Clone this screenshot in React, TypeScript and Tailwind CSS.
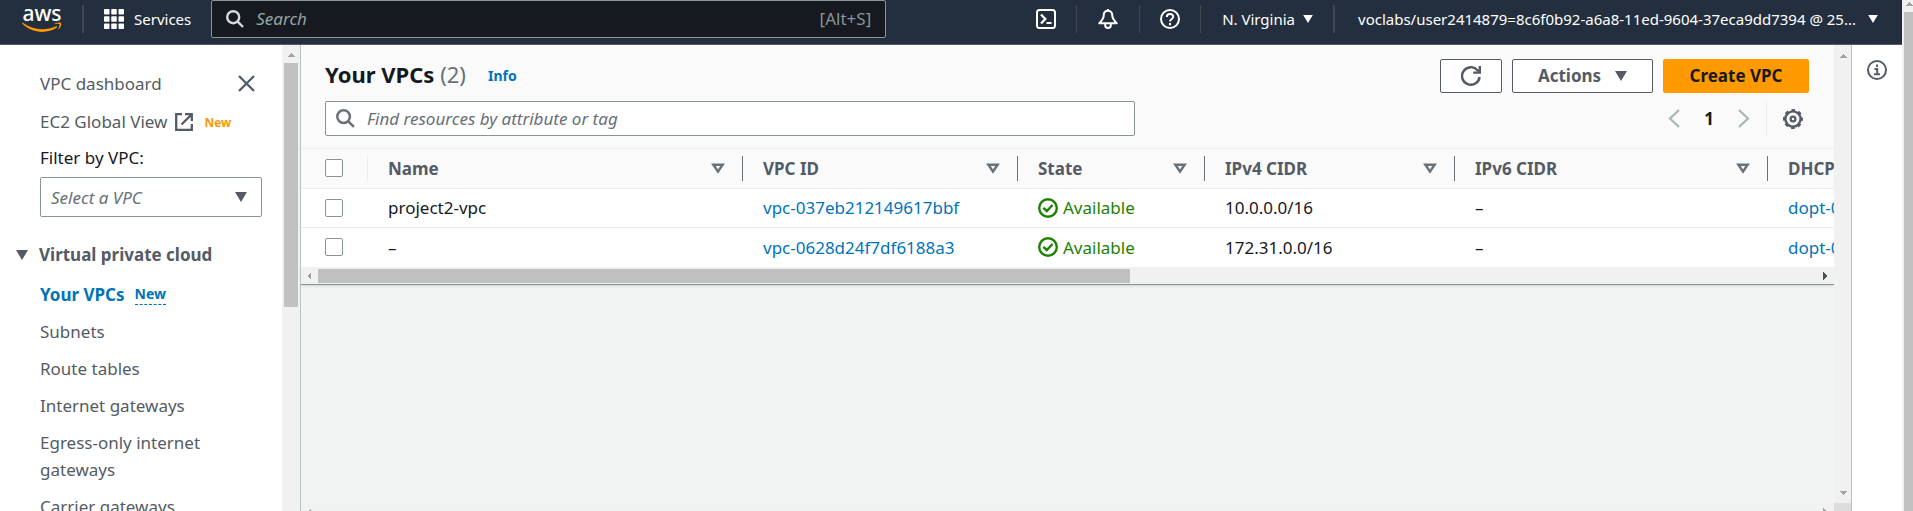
import React from "react";

const NAV = [
  "Subnets",
  "Route tables",
  "Internet gateways",
  "Egress-only internet gateways",
  "Carrier gateways",
];

const VPCS = [
  { name: "project2-vpc", id: "vpc-037eb212149617bbf", v4: "10.0.0.0/16", v6: "–", dhcp: "dopt-0" },
  { name: "–", id: "vpc-0628d24f7df6188a3", v4: "172.31.0.0/16", v6: "–", dhcp: "dopt-0" },
];

const COLUMNS = ["Name", "VPC ID", "State", "IPv4 CIDR", "IPv6 CIDR"];

function Arrow({ dir, className = "" }: { dir: "up" | "down" | "left" | "right"; className?: string }) {
  const d = {
    up: "M4 0 8 4H0Z",
    down: "M0 0H8L4 4Z",
    left: "M4 0V8L0 4Z",
    right: "M0 0 4 4 0 8Z",
  }[dir];
  const flat = dir === "up" || dir === "down";
  return (
    <svg
      className={"shrink-0 " + (className || "text-[#a3a3a3]")}
      width={flat ? 8 : 4}
      height={flat ? 4 : 8}
      viewBox={flat ? "0 0 8 4" : "0 0 4 8"}
      fill="currentColor"
      shapeRendering="crispEdges"
    >
      <path d={d} />
    </svg>
  );
}

function Caret({ className = "" }: { className?: string }) {
  return (
    <svg className={"shrink-0 " + className} viewBox="0 0 12 10" fill="currentColor">
      <path d="M0 0H12L6 10Z" />
    </svg>
  );
}

function SearchIcon({ className = "" }: { className?: string }) {
  return (
    <svg className={"shrink-0 " + className} viewBox="0 0 18 18" fill="none" stroke="currentColor" strokeWidth="2.4">
      <circle cx="7.2" cy="7.2" r="6" />
      <path d="M11.4 11.4 17 17" />
    </svg>
  );
}

function AwsLogo() {
  return (
    <span className="flex w-10 flex-col items-center">
      <span className="h-4 text-[21px] leading-[14px] font-medium text-white">aws</span>
      <svg width="40" height="10" viewBox="0 0 40 10" fill="none">
        <path
          d="M.8.8C6.500 5 13 7.200 20 7.200c4.800 0 9.800-1 14.200-2.900.8-.3 1.500.6.700 1.200C31 8.400 25.200 9.900 20.100 9.900 12.800 9.900 6 7.200.4 1.800 0 1.300.3.600.8.8Z"
          fill="#ff9900"
        />
        <path
          d="M32.800 2.200c-.3-.3-.1-.6.1-.8C34.400.4 36.900.2 38.800.8c.9.300.5 4.300-2 6.400-.4.300-.7.100-.5-.3.600-1.400 1.600-4 1.200-4.700-.5-.6-3.200-.4-4.700 0Z"
          fill="#ff9900"
        />
      </svg>
    </span>
  );
}

function TopBar() {
  return (
    <header className="flex h-[45px] shrink-0 items-start border-b border-[#545b64] bg-[#232f3e] text-[15px] text-white">
      <a href="#home" aria-label="AWS home" className="ml-[22px] flex h-[38px] items-center">
        <AwsLogo />
      </a>
      <span className="mt-[5px] ml-5 h-7 w-0.5 bg-[#414750]" />
      <button className="ml-5 flex h-[38px] items-center gap-2.5">
        <svg width="20" height="20" viewBox="0 0 20 20" fill="currentColor">
          {[0, 7.25, 14.5].map((y) =>
            [0, 7.25, 14.5].map((x) => <rect key={x + "-" + y} x={x} y={y} width="5.5" height="5.5" rx=".8" />),
          )}
        </svg>
        Services
      </button>
      <label className="ml-5 flex h-[38px] w-[675px] items-center rounded-[2px] border border-[#879596] bg-[#16191f] px-3.5">
        <SearchIcon className="size-[18px] text-[#d5dbdb]" />
        <input
          aria-label="Search"
          placeholder="Search"
          className="ml-3 min-w-0 flex-1 bg-transparent text-[17px] outline-none placeholder:text-[#95a5a6] placeholder:italic"
        />
        <span className="text-[17px] text-[#879596]">[Alt+S]</span>
      </label>
      <div className="ml-auto flex h-[38px] items-center">
        <button aria-label="CloudShell" className="mr-5">
          <svg width="20" height="20" viewBox="0 0 20 20" fill="none" stroke="currentColor" strokeWidth="2">
            <rect x="1" y="1" width="18" height="18" rx="2.5" />
            <path d="M5 5.500 9.300 10 5 14.500" strokeWidth="2.3" />
            <path d="M10.500 14h5" />
          </svg>
        </button>
        <span className="h-7 w-px bg-[#414750]" />
        <button aria-label="Notifications" className="mx-[21px]">
          <svg width="20" height="20" viewBox="0 0 20 20" fill="none" stroke="currentColor" strokeWidth="2" strokeLinejoin="round">
            <path d="M10 1.800C7.200 1.800 5.700 4 5.700 6.500 5.700 9.700 4.500 11 1.300 14.200H18.700C15.500 11 14.300 9.700 14.300 6.500 14.300 4 12.800 1.800 10 1.800Z" />
            <path d="M10 0v2M7.200 14.500v1.700a2.800 2.800 0 0 0 5.600 0v-1.700" />
          </svg>
        </button>
        <span className="h-7 w-px bg-[#414750]" />
        <button aria-label="Help" className="mx-5">
          <svg width="20" height="20" viewBox="0 0 20 20" fill="none" stroke="currentColor" strokeWidth="2">
            <circle cx="10" cy="10" r="9" />
            <path d="M6.800 8.100C6.800 6 8.200 4.900 10 4.900s3.200 1.100 3.200 2.800c0 2.200-3.200 2.300-3.200 4.800" />
            <path d="M10 14v2.200" />
          </svg>
        </button>
        <span className="h-7 w-px bg-[#414750]" />
        <button className="ml-[21px] flex items-center gap-2">
          N. Virginia
          <Caret className="h-2 w-2.5" />
        </button>
        <span className="ml-5 h-7 w-0.5 bg-[#414750]" />
        <button className="mr-6 ml-[23px] flex items-center gap-3">
          voclabs/user2414879=8c6f0b92-a6a8-11ed-9604-37eca9dd7394 @ 25...
          <Caret className="h-2 w-2.5" />
        </button>
      </div>
    </header>
  );
}

function Sidebar() {
  return (
    <nav className="flex w-[300px] shrink-0 bg-white text-[#545b64]">
      <div className="min-w-0 flex-1 overflow-hidden pt-[25px] pr-5 pl-10 text-[17px] leading-[27px]">
        <div className="flex items-center justify-between">
          <a href="#dashboard">VPC dashboard</a>
          <button aria-label="Close navigation" className="mr-[7px]">
            <svg width="17" height="17" viewBox="0 0 17 17" stroke="currentColor" strokeWidth="2.3">
              <path d="M1 1 16 16M16 1 1 16" />
            </svg>
          </button>
        </div>
        <div className="mt-[11px] flex items-center">
          <a href="#global" className="flex items-center gap-2">
            EC2 Global View
            <svg width="18" height="18" viewBox="0 0 18 18" fill="none" stroke="currentColor" strokeWidth="2.3">
              <path d="M7 1.200H1.200V16.800H16.800V11M10 1.200h6.800V8M16.500 1.500 6.500 11.500" />
            </svg>
          </a>
          <span className="mt-0.5 ml-[11px] text-[12px] leading-5 font-bold text-[#ff9900]">New</span>
        </div>
        <label htmlFor="vpc-filter" className="mt-[9px] block text-[#16191f]">
          Filter by VPC:
        </label>
        <div className="relative mt-1.5 h-10">
          <select
            id="vpc-filter"
            className="size-full appearance-none rounded-[2px] border border-[#879596] bg-white px-2.5 text-[#687078] italic"
          >
            <option>Select a VPC</option>
          </select>
          <Caret className="pointer-events-none absolute top-[15px] right-[15px] h-2.5 w-3" />
        </div>
        <button className="mt-6 -ml-6 flex items-center gap-[11px] font-bold">
          <Caret className="h-2.5 w-3" />
          Virtual private cloud
        </button>
        <ul className="mt-[13px] flex flex-col gap-2.5">
          <li className="flex items-center gap-2.5 font-bold text-[#0073bb]">
            <a href="#vpcs">Your VPCs</a>
            <a href="#new" className="border-b border-dashed border-[#0073bb] text-[14px] leading-5">
              New
            </a>
          </li>
          {NAV.map((item) => (
            <li key={item}>
              <a href="#nav">{item}</a>
            </li>
          ))}
        </ul>
      </div>
      <div className="flex w-[18px] flex-col items-center bg-[#f1f1f1] pt-2">
        <Arrow dir="up" />
        <span className="mt-1.5 h-[244px] w-3.5 bg-[#c1c1c1]" />
      </div>
    </nav>
  );
}

function Toolbar() {
  const button = "flex h-[34px] items-center rounded-[2px] border border-[#545b64] bg-white font-bold text-[#545b64]";
  return (
    <div className="bg-[#fafafa] pt-3.5 pr-[25px] pb-3 pl-6">
      <div className="flex h-[34px] items-start">
        <h1 className="text-[22px] leading-[30px] font-bold text-[#16191f]">
          Your VPCs <span className="font-normal text-[#687078]">(2)</span>
        </h1>
        <a href="#info" className="mt-0.5 ml-[22px] text-[14px] leading-[30px] font-bold text-[#0073bb]">
          Info
        </a>
        <div className="ml-auto flex gap-2.5 text-[17px]">
          <button aria-label="Refresh" className={button + " w-[62px] justify-center"}>
            <svg width="20" height="20" viewBox="0 0 20 20" fill="none" stroke="currentColor" strokeWidth="2.4">
              <path d="M18.600 11A8.800 8.800 0 1 1 16.500 4.200L18.500 6.500" />
              <path d="M18.800 0V6.600H12.200" />
            </svg>
          </button>
          <button className={button + " w-[141px] justify-center gap-3.5"}>
            Actions
            <Caret className="h-2.5 w-3" />
          </button>
          <button className="h-[34px] w-[146px] rounded-[2px] bg-[#ff9900] font-bold text-[#16191f]">Create VPC</button>
        </div>
      </div>
      <div className="mt-2 flex h-[35px] items-center">
        <label className="flex h-full w-[810px] items-center rounded-[2px] border border-[#879596] bg-white px-2.5">
          <SearchIcon className="size-[19px] text-[#687078]" />
          <input
            aria-label="Find resources"
            placeholder="Find resources by attribute or tag"
            className="ml-3 min-w-0 flex-1 text-[17px] outline-none placeholder:text-[#687078] placeholder:italic"
          />
        </label>
        <div className="ml-auto flex h-full items-center text-[#aab7b8]">
          <button aria-label="Previous page">
            <svg width="12" height="19" viewBox="0 0 12 19" fill="none" stroke="currentColor" strokeWidth="2.3">
              <path d="M11 1 2 9.500 11 18" />
            </svg>
          </button>
          <button className="w-[58px] text-[17px] font-bold text-[#16191f]">1</button>
          <button aria-label="Next page">
            <svg width="12" height="19" viewBox="0 0 12 19" fill="none" stroke="currentColor" strokeWidth="2.3">
              <path d="M1 1 10 9.500 1 18" />
            </svg>
          </button>
          <span className="ml-4 h-full w-px bg-[#eaeded]" />
          <button aria-label="Preferences" className="mr-1.5 ml-4 text-[#545b64]">
            <svg width="20" height="20" viewBox="0 0 20 20" fill="none" stroke="currentColor">
              <circle cx="10" cy="10" r="7.6" strokeWidth="2.4" />
              <circle cx="10" cy="10" r="9" strokeWidth="2" strokeDasharray="3.6 3.469" strokeDashoffset="1.8" />
              <circle cx="10" cy="10" r="2.4" strokeWidth="2.2" />
            </svg>
          </button>
        </div>
      </div>
    </div>
  );
}

const BOX = "block size-[18px] appearance-none rounded-[2px] border border-[#879596] bg-white";

function VpcTable() {
  return (
    <div className="overflow-hidden border-t border-[#eaeded] bg-white text-[17px]">
      <table className="w-full table-fixed border-collapse text-left whitespace-nowrap">
        <colgroup>
          <col className="w-[67px]" />
          <col className="w-[375px]" />
          <col className="w-[275px]" />
          <col className="w-[187px]" />
          <col className="w-[250px]" />
          <col className="w-[313px]" />
          <col />
        </colgroup>
        <thead>
          <tr className="h-[39px] border-b border-[#eaeded] bg-[#fafafa] text-[#545b64]">
            <th className="p-0">
              <div className="flex h-[25px] items-center border-r border-[#eaeded] pl-6">
                <input type="checkbox" aria-label="Select all" className={BOX} />
              </div>
            </th>
            {COLUMNS.map((label) => (
              <th key={label} className="p-0">
                <div className="flex h-[25px] items-center justify-between border-r border-[#687078] pr-[17px] pl-5">
                  {label}
                  <svg width="14" height="11" viewBox="0 0 14 11" fill="none" stroke="#687078" strokeWidth="2.5">
                    <path d="M2.400 1.800H11.600L7 8.600Z" />
                  </svg>
                </div>
              </th>
            ))}
            <th className="overflow-hidden p-0 pl-5">DHCP option set</th>
          </tr>
        </thead>
        <tbody className="text-[#16191f]">
          {VPCS.map((v) => (
            <tr key={v.id} className="h-[39px] border-b border-[#eaeded] last:h-10 last:border-b-0">
              <td className="p-0 pl-6">
                <input type="checkbox" aria-label={"Select " + v.id} className={BOX} />
              </td>
              <td className="p-0 pl-5">{v.name}</td>
              <td className="p-0 pl-5">
                <a href="#vpc" className="text-[#0073bb]">
                  {v.id}
                </a>
              </td>
              <td className="p-0 pl-5">
                <span className="flex items-center gap-[5px] text-[#1d8102]">
                  <svg width="20" height="20" viewBox="0 0 20 20" fill="none" stroke="currentColor" strokeWidth="2.4">
                    <circle cx="10" cy="10" r="8.8" />
                    <path d="M5.300 9.800 8.800 13 14.500 7" />
                  </svg>
                  Available
                </span>
              </td>
              <td className="p-0 pl-5">{v.v4}</td>
              <td className="p-0 pl-5">{v.v6}</td>
              <td className="overflow-hidden p-0 pl-5">
                <a href="#dhcp" className="text-[#0073bb]">
                  {v.dhcp}
                </a>
              </td>
            </tr>
          ))}
        </tbody>
      </table>
      <div className="flex h-[17px] items-center bg-[#f1f1f1] pr-[7px] pl-1.5">
        <Arrow dir="left" />
        <div className="mx-[7px] h-3.5 flex-1">
          <div className="h-full w-[54.2%] bg-[#c1c1c1]" />
        </div>
        <Arrow dir="right" className="text-[#505050]" />
      </div>
    </div>
  );
}

export default function App() {
  return (
    <div className="flex h-screen overflow-hidden bg-white font-['Noto_Sans',sans-serif]">
      <div className="flex min-w-0 flex-1 flex-col">
        <TopBar />
        <div className="flex min-h-0 flex-1">
          <Sidebar />
          <main className="flex min-w-0 flex-1 flex-col border-l border-[#b9c3c3] bg-[#f2f3f3]">
            <div className="flex min-h-0 flex-1">
              <div className="min-w-0 flex-1 overflow-hidden">
                <section className="border-b border-[#879596] shadow-sm">
                  <Toolbar />
                  <VpcTable />
                </section>
              </div>
              <div className="flex w-[17px] flex-col items-center justify-between bg-[#f1f1f1] pt-[9px] pb-2">
                <Arrow dir="up" />
                <Arrow dir="down" />
              </div>
            </div>
            <div className="flex h-2 shrink-0 overflow-hidden bg-[#f1f1f1]">
              <div className="flex flex-1 items-start justify-between pt-[5px] pr-[7px] pl-1.5">
                <Arrow dir="left" />
                <Arrow dir="right" />
              </div>
              <div className="w-[17px] bg-[#dcdcdc]" />
            </div>
          </main>
          <aside className="flex w-[51px] justify-center border-l border-[#b9c3c3] bg-white pt-[15px]">
            <button aria-label="Open help panel" className="h-5 text-[#545b64]">
              <svg width="20" height="20" viewBox="0 0 20 20" fill="none" stroke="currentColor" strokeWidth="2">
                <circle cx="10" cy="10" r="9" />
                <path d="M10 4.500v2.500M7.500 9H10.200V14M7 14.200h6" />
              </svg>
            </button>
          </aside>
        </div>
      </div>
      <div className="flex w-[11px] shrink-0 flex-col items-end overflow-hidden bg-[#f1f1f1] pt-0.5">
        <Arrow dir="up" />
        <span className="mt-1.5 w-[9px] flex-1 bg-[#c1c1c1]" />
      </div>
    </div>
  );
}
